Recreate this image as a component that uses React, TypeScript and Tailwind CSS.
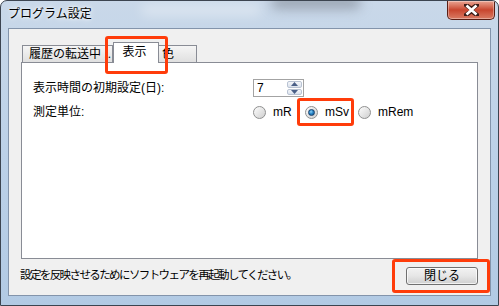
import React from 'react'

const jp = "font-['Liberation_Sans','Noto_Sans_CJK_JP',sans-serif]"

function Radio({ checked, label, width }: { checked?: boolean; label: string; width: string }) {
  return (
    <div className={`flex items-center gap-[7px] ${width}`}>
      <span className="relative flex h-[13px] w-[13px] items-center justify-center rounded-full border border-[#8f9090] bg-gradient-to-br from-[#fdfdfd] via-[#e6e6e6] to-[#cfcfcf]">
        {checked && (
          <span className="h-[7px] w-[7px] rounded-full border border-[#17406b] bg-[radial-gradient(circle_at_40%_35%,#8fd3f7_0%,#2a86c8_45%,#0f4f86_100%)]" />
        )}
      </span>
      <span className="text-[12px] leading-none text-black">{label}</span>
    </div>
  )
}

function Spinner() {
  return (
    <div className="flex h-[18px] w-[51px] items-center border border-[#a3a3a3] bg-white pl-[3px] pr-[1px]">
      <span className="flex-1 text-[12px] leading-none text-black">7</span>
      <div className="flex h-[14px] w-[15px] flex-col gap-[1px]">
        <div className="flex flex-1 items-center justify-center rounded-[2px] border border-[#b9c3d3] bg-gradient-to-b from-[#f4f6fa] to-[#dbe2ec]">
          <svg width="7" height="4" viewBox="0 0 7 4"><path d="M0 4 L3.5 0 L7 4 Z" fill="#4a5f87" /></svg>
        </div>
        <div className="flex flex-1 items-center justify-center rounded-[2px] border border-[#b9c3d3] bg-gradient-to-b from-[#f4f6fa] to-[#dbe2ec]">
          <svg width="7" height="4" viewBox="0 0 7 4"><path d="M0 0 L3.5 4 L7 0 Z" fill="#4a5f87" /></svg>
        </div>
      </div>
    </div>
  )
}

export default function App() {
  return (
    <div className={`relative flex h-[306px] w-[499px] flex-col overflow-hidden rounded-t-[7px] border border-[#3c4450] bg-gradient-to-b from-[#c9d8e9] via-[#bcd1e8] to-[#b2cae4] px-[7px] pb-[9px] ${jp}`}>
      {/* blurred glass */}
      <div className="pointer-events-none absolute left-[270px] top-[-6px] h-[14px] w-[90px] rounded-full bg-[#6d7480]/50 blur-[6px]" />
      <div className="pointer-events-none absolute left-[140px] top-[4px] h-[10px] w-[120px] rounded-full bg-white/40 blur-[6px]" />

      {/* Title bar */}
      <div className="relative flex h-[27px] items-start justify-between">
        <span className="mt-[7px] text-[12px] leading-none text-black [text-shadow:0_0_6px_#fff,0_0_3px_#fff]">プログラム設定</span>
        <button className="-mr-[4px] flex h-[19px] w-[48px] items-center justify-center rounded-b-[5px] border border-t-0 border-[#5a1e14] bg-gradient-to-b from-[#e9a493] via-[#c8452e] to-[#d97a63] shadow-[inset_0_0_0_1px_rgba(255,255,255,0.35)]">
          <svg width="15" height="12" viewBox="0 0 15 12">
            <path d="M2 1 L7.5 5 L13 1 M2 11 L7.5 7 L13 11" stroke="#3d1d18" strokeWidth="4.5" fill="none" strokeLinecap="round" />
            <path d="M2.5 1.5 L12.5 10.5 M12.5 1.5 L2.5 10.5" stroke="#fff" strokeWidth="2.6" fill="none" />
          </svg>
        </button>
      </div>

      {/* Client area */}
      <div className="relative flex flex-1 flex-col border border-[#8394ab] bg-[#f0f0f0]">
        <div className="px-[12px] pt-[13px]">
          {/* Tabs */}
          <div className="flex h-[20px] items-end pl-[1px]">
            <div className="flex h-[17px] w-[91px] items-center border border-b-0 border-[#898c95] bg-gradient-to-b from-[#f5f5f5] to-[#e0e0e0] pl-[6px] text-[12px] leading-none text-black">
              履歴の転送中 ..
            </div>
            <div className="relative z-10 -mb-[1px] flex h-[21px] w-[46px] items-center justify-center border border-b-0 border-[#898c95] bg-white pb-[2px] pr-[3px] text-[12px] leading-none text-black">
              表示
            </div>
            <div className="flex h-[17px] w-[38px] items-center border border-b-0 border-l-0 border-[#898c95] bg-gradient-to-b from-[#f5f5f5] to-[#e0e0e0] pl-[3px] text-[12px] leading-none text-black">
              色
            </div>
          </div>

          {/* Panel */}
          <div className="h-[197px] border border-[#898c95] bg-white pl-[11px] pt-[16px]">
            <div className="grid grid-cols-[220px_1fr] items-center gap-y-[7px] text-[12px] leading-none text-black">
              <span>表示時間の初期設定(日):</span>
              <Spinner />
              <span>測定単位:</span>
              <div className="flex h-[16px] items-center">
                <Radio label="mR" width="w-[52px]" />
                <Radio label="mSv" width="w-[53px]" checked />
                <Radio label="mRem" width="w-[60px]" />
              </div>
            </div>
          </div>
        </div>

        {/* Footer */}
        <div className="flex flex-1 items-start justify-between pl-[11px] pr-[12px] pt-[8px]">
          <span className="mt-[3px] text-[11.5px] leading-none tracking-[-1.6px] text-black">
            設定を反映させるためにソフトウェアを再起動してください。
          </span>
          <button className="flex h-[18px] w-[72px] items-center justify-center rounded-[3px] border border-[#707070] bg-gradient-to-b from-[#f2f2f2] via-[#e6e6e6] to-[#cfcfcf] text-[12px] leading-none text-black shadow-[inset_0_0_0_1px_rgba(255,255,255,0.7)]">
            閉じる
          </button>
        </div>
      </div>

      {/* Annotation boxes */}
      <div className="pointer-events-none absolute left-[104px] top-[35px] h-[38px] w-[63px] rounded-[3px] border-[3px] border-[#ff3c0a]" />
      <div className="pointer-events-none absolute left-[296px] top-[97px] h-[28px] w-[57px] rounded-[3px] border-[3px] border-[#ff3c0a]" />
      <div className="pointer-events-none absolute left-[391px] top-[258px] h-[34px] w-[98px] rounded-[3px] border-[3px] border-[#ff3c0a]" />
    </div>
  )
}
